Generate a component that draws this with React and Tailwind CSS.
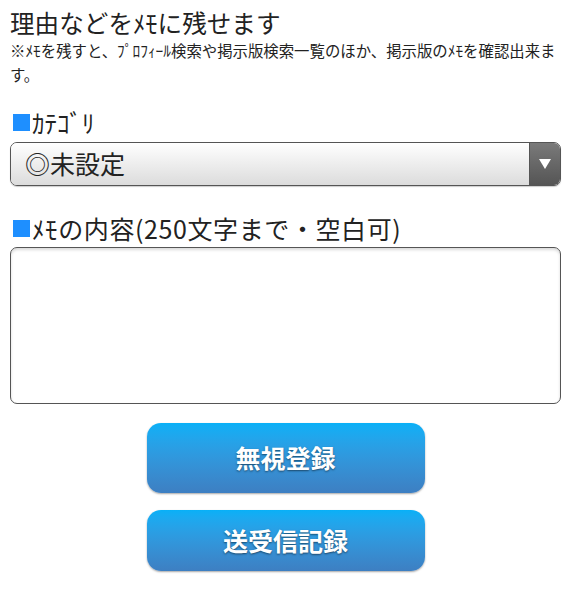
import React from 'react';

const font = { fontFamily: '"Noto Sans CJK JP", "Noto Sans", sans-serif' };

const Label = ({ children, wide }) => (
  <div className={`flex items-center text-[25px] leading-[32px] text-[#222] ${wide ? 'tracking-[0.6px]' : ''}`}>
    <span className="inline-block w-[17px] h-[17px] bg-[#1e8fff] ml-[3px] mr-[2px]" />
    <span>{children}</span>
  </div>
);

const Button = ({ label, tall }) => (
  <button
    type="button"
    className={`w-[278px] ${tall ? 'h-[70px]' : 'h-[61px]'} rounded-[14px] bg-gradient-to-b from-[#08b0f7] to-[#3d7fc2] text-white text-[25px] font-bold shadow-[0_1px_2px_rgba(0,0,0,0.35)] [text-shadow:0_1px_2px_rgba(0,0,0,0.5)]`}
  >
    {label}
  </button>
);

export default function App() {
  return (
    <div className="bg-white min-h-[607px] pl-[10px] pr-[6px] pt-[6px]" style={font}>
      <h1 className="text-[24.6px] leading-[32px] text-[#222] font-normal">理由などをﾒﾓに残せます</h1>
      <p className="text-[15.4px] leading-[24px] text-[#222]">
        ※ﾒﾓを残すと、ﾌﾟﾛﾌｨｰﾙ検索や掲示版検索一覧のほか、掲示版のﾒﾓを確認出来ます。
      </p>

      <div className="mt-[20px]">
        <Label>ｶﾃｺﾞﾘ</Label>
      </div>
      <div className="mt-[4px] h-[44px] flex rounded-[7px] border border-[#555] overflow-hidden shadow-[0_1px_1px_rgba(0,0,0,0.2)]">
        <div className="flex-1 flex items-center pl-[14px] bg-gradient-to-b from-[#ffffff] to-[#dcdcdc] text-[25px] text-[#222]">
          ◎未設定
        </div>
        <div className="w-[31px] flex items-center justify-center border-l border-[#555] bg-gradient-to-b from-[#7a7a7a] to-[#555]">
          <svg width="12" height="10" viewBox="0 0 12 10">
            <polygon points="0,0 12,0 6,10" fill="#fff" />
          </svg>
        </div>
      </div>

      <div className="mt-[26px]">
        <Label wide>ﾒﾓの内容(250文字まで・空白可)</Label>
      </div>
      <textarea
        className="mt-[3px] block w-full h-[157px] rounded-[7px] border-[1.5px] border-[#555] shadow-[inset_0_2px_3px_rgba(0,0,0,0.15)] resize-none outline-none p-2 text-[20px]"
      />

      <div className="flex flex-col items-center mt-[19px] gap-[17px]">
        <Button label="無視登録" tall />
        <Button label="送受信記録" />
      </div>
    </div>
  );
}
